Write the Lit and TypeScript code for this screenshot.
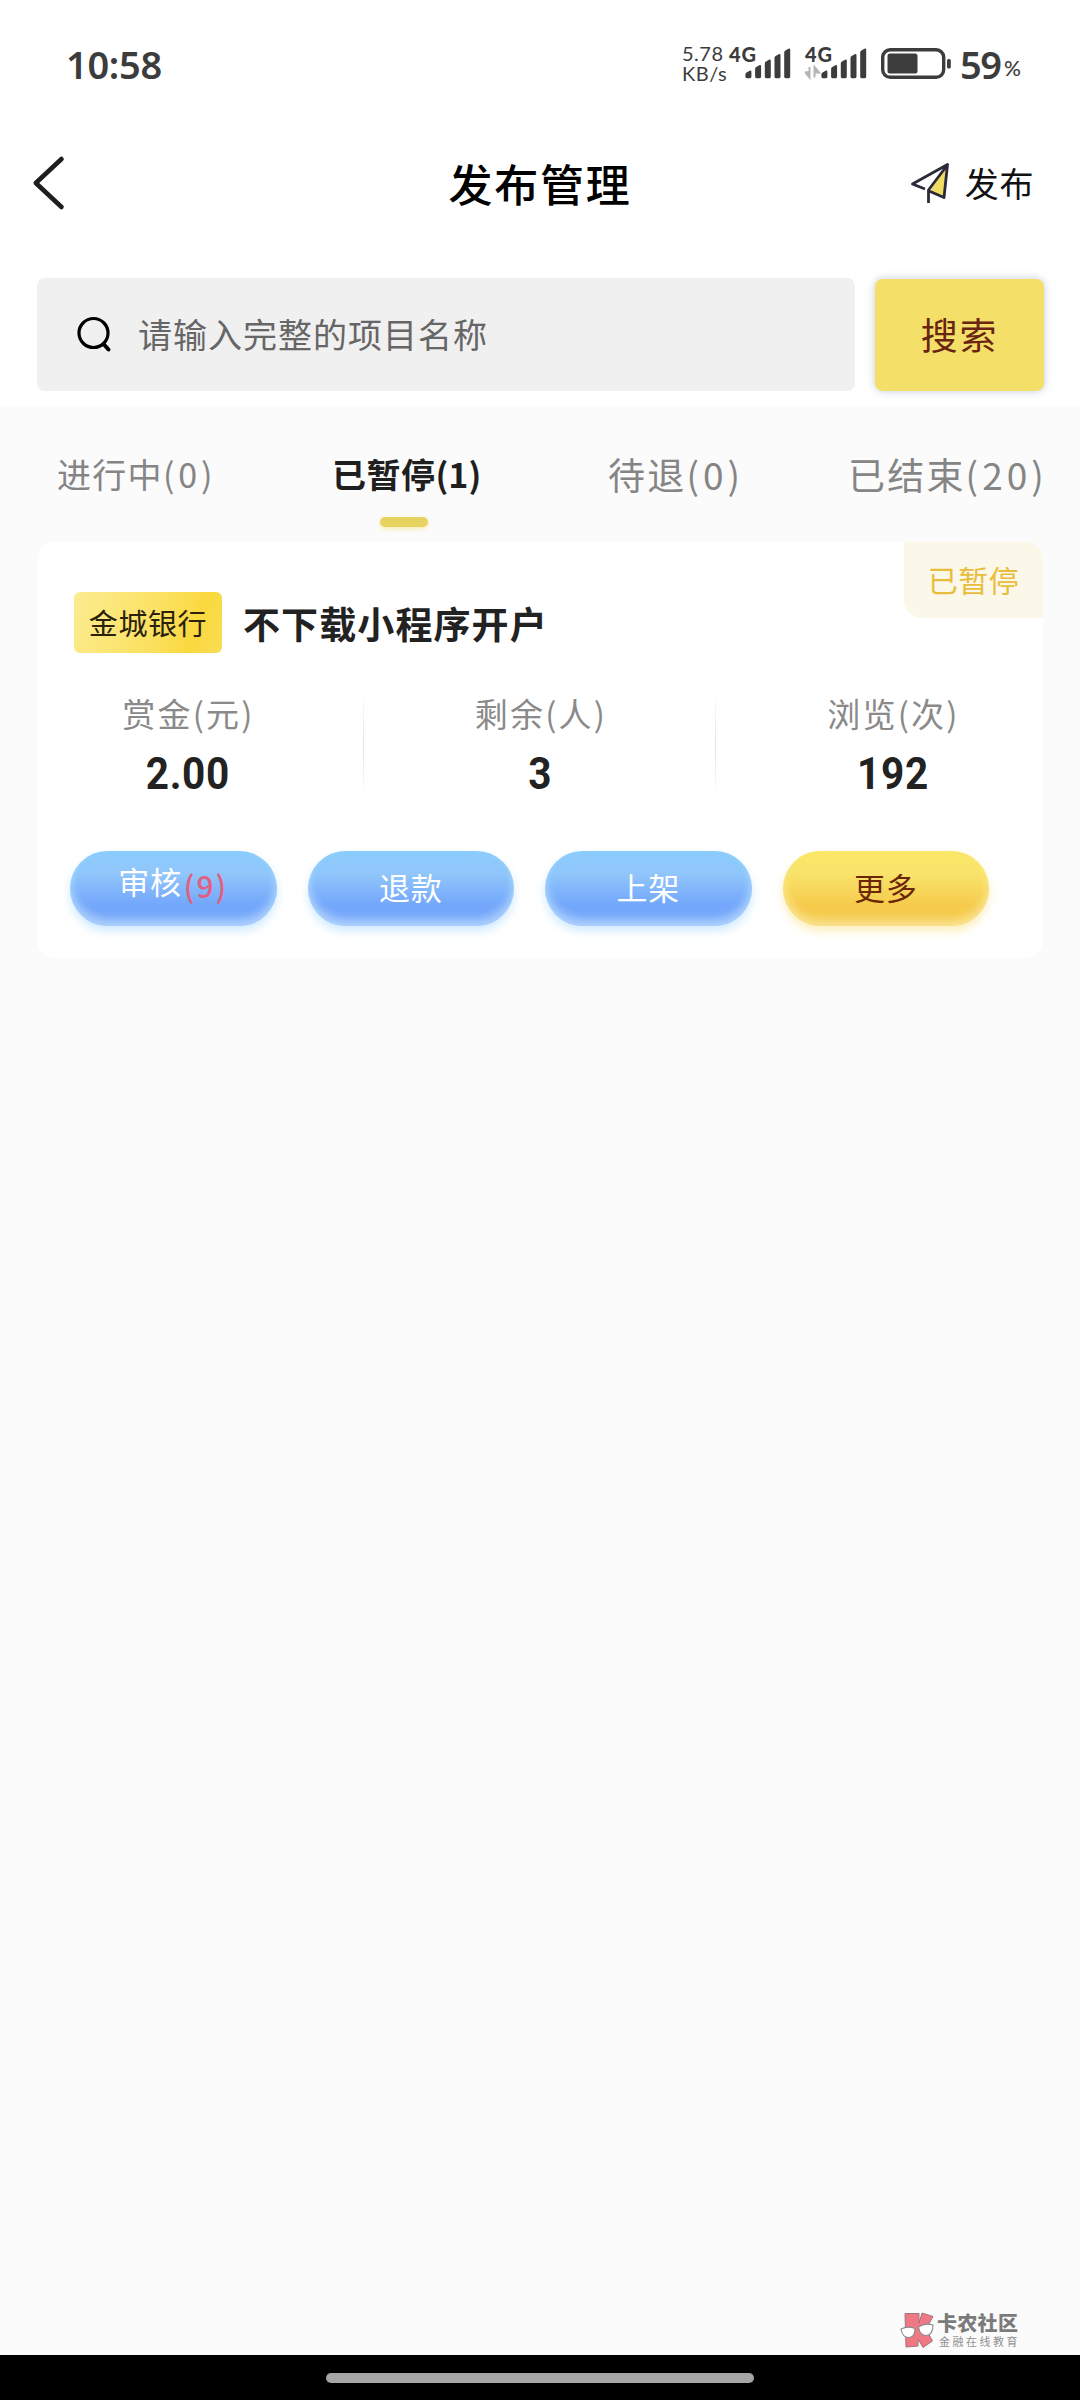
import { LitElement, html, css, svg } from "lit";
import { customElement, property } from "lit/decorators.js";

const cjk = css`"Noto Sans CJK SC", "Noto Sans", sans-serif`;

@customElement("signal-bars")
class SignalBars extends LitElement {
  @property({ type: Boolean }) data = false;

  static styles = css`
    :host { display: block; }
    .wrap { display: block; position: relative; width: 62px; height: 34px; }
    .gen { position: absolute; left: 0; top: -1px; font: 900 20px/18px Lato, sans-serif; letter-spacing: 0.8px; color: #3c3c3c; }
    svg { display: block; }
  `;

  render() {
    const tops = [24.5, 19, 13.5, 8, 2.5];
    return html`<div class="wrap">
      <span class="gen">4G</span>
      <svg width="62" height="34" viewBox="0 0 62 34">
        ${tops.map((t, i) => {
          const x = 16.4 + i * 9.7;
          return svg`<path d="M${x} ${t + 4}q0-1.4 1.2-2l3-1.8q1.8-.8 1.8 1V30.8q0 1.400-1.400 1.400h-3.200q-1.400 0-1.400-1.400z" fill="#3c3c3c"/>`;
        })}
        ${this.data
          ? svg`<path d="M4.500 21v10.500L0 26.200h4.500M9.500 31.500V21L14 26.400H9.500" fill="#b5b5b5" stroke="#b5b5b5" stroke-width="2"/>`
          : null}
      </svg>
    </div>`;
  }
}

@customElement("action-pill")
class ActionPill extends LitElement {
  @property() label = "";
  @property() count = "";
  @property({ type: Boolean, reflect: true }) gold = false;

  static styles = css`
    :host {
      display: flex; align-items: center; justify-content: center; box-sizing: border-box;
      width: 206.5px; height: 75px; padding-bottom: 3px; border-radius: 38px;
      font: 400 31px/40px ${cjk}; letter-spacing: 0.7px; color: #fff;
      background: linear-gradient(180deg, #8dcdfd 0%, #91c6fb 30%, #74a8fb 70%, #6fa3fb 100%);
      box-shadow: 0 5px 10px rgba(140, 205, 255, 0.42), inset 0 -7px 10px rgba(255, 255, 255, 0.42), inset 0 0 12px rgba(130, 205, 252, 0.6);
    }
    :host([gold]) {
      color: #6b2708;
      background: linear-gradient(180deg, #fbe868 0%, #f9e36c 30%, #f6cb4b 72%, #f6c846 100%);
      box-shadow: 0 5px 10px rgba(250, 215, 90, 0.42), inset 0 -7px 10px rgba(255, 255, 255, 0.36), inset 0 0 12px rgba(250, 228, 100, 0.7);
    }
    .raised { padding-bottom: 12px; }
    .count { color: #e0607f; font-size: 30px; font-weight: 500; letter-spacing: 2px; padding: 0 0 4px 2px; }
  `;

  render() {
    return this.count
      ? html`<span class="raised">${this.label}</span><span class="count">(${this.count})</span>`
      : html`<span>${this.label}</span>`;
  }
}

@customElement("app-root")
class AppRoot extends LitElement {
  static styles = css`
    :host { display: block; }
    * { box-sizing: border-box; }
    .page { display: flex; flex-direction: column; width: 1080px; height: 2400px; background: #fbfbfb; font-family: ${cjk}; overflow: hidden; }
    .top { background: #fff; height: 407px; display: flex; flex-direction: column; }
    .status { display: flex; height: 120px; padding: 45px 58px 0 66px; color: #3c3c3c; align-items: flex-start; font-family: Lato, sans-serif; }
    .clock { font: 600 38px/38px "Noto Sans", sans-serif; flex: 1; letter-spacing: -0.3px; }
    .speed { width: 47px; font-size: 20px; line-height: 20.5px; white-space: nowrap; letter-spacing: 0.500px; margin-top: -2.500px; }
    .sig { width: 76px; padding-top: 1px; }
    .battery { display: block; margin: 2px 8px 0 -1px; }
    .pct { font: 600 38px/38px "Noto Sans", sans-serif; letter-spacing: -1.500px; width: 44px; }
    .sign { font-size: 21px; line-height: 46px; width: 18px; font-weight: 500; }

    .nav { display: grid; grid-template-columns: 1fr auto 1fr; align-items: center; height: 126px; padding: 0 46px 0 32px; }
    .back { display: block; }
    .title { font-size: 44px; line-height: 60px; font-weight: 500; letter-spacing: 1.800px; color: #000; margin: 0 -7px 0 7px; }
    .publish { display: flex; justify-content: flex-end; align-items: center; gap: 13px; font-size: 34px; line-height: 48px; letter-spacing: 0.600px; color: #111; }
    .publish span { padding-bottom: 1px; }

    .search { display: flex; gap: 20px; padding: 32px 36px 0 37px; }
    .field { display: flex; align-items: center; width: 818px; height: 113px; padding-left: 39px; gap: 26px; border-radius: 8px; background: #f0f0f0; color: #666; font-size: 34px; line-height: 48px; letter-spacing: 1px; }
    .field span { padding-bottom: 2px; }
    .go { display: flex; align-items: center; justify-content: center; width: 169px; height: 112px; margin-top: 1px; padding-bottom: 2px; border-radius: 8px; background: #f4df68; color: #6a2412; font-size: 37px; line-height: 50px; letter-spacing: 1.700px; box-shadow: 0 0 9px rgba(90, 120, 150, 0.38); }

    .tabs { display: grid; grid-template-columns: 275px 276px 240px auto; height: 135px; padding: 37px 0 0 57px; color: #858585; white-space: nowrap; }
    .tab { display: flex; flex-direction: column; align-items: flex-start; font-size: 34px; line-height: 60px; letter-spacing: 1.300px; }
    .num { letter-spacing: 3.800px; }
    .wide { font-size: 37px; letter-spacing: 2.200px; }
    .wide .num { letter-spacing: 4px; }
    .on { color: #1f1f1f; font-weight: 700; letter-spacing: 0.500px; }
    .on .num { letter-spacing: 0; }
    .mark { width: 48px; height: 10px; margin: 13px 0 0 48px; border-radius: 5px; background: #e6d360; box-shadow: 0 2px 4px rgba(244, 223, 104, 0.5); }

    .card { display: flex; flex-direction: column; width: 1006px; height: 416px; margin-left: 37px; border-radius: 18px; background: #fff; overflow: hidden; }
    .head { display: flex; height: 141px; padding-left: 37px; }
    .bank { display: flex; align-items: center; justify-content: center; width: 148px; height: 61px; margin-top: 50px; padding-bottom: 2px; border-radius: 6px; background: linear-gradient(110deg, #fcec92 0%, #fbe161 55%, #fad83e 80%, #f8dc55 100%); color: #2a220c; font-size: 29px; line-height: 40px; letter-spacing: 0.600px; }
    .name { flex: 1; margin: 51px 0 0 21px; font-size: 37px; line-height: 60px; font-weight: 700; letter-spacing: 1.100px; color: #222; }
    .state { display: flex; align-items: center; justify-content: center; width: 139px; height: 76px; padding-bottom: 2px; border-radius: 0 0 0 18px; background: #fcf8e9; color: #e9bd3c; font-size: 30px; line-height: 40px; letter-spacing: 0.500px; }

    .stats { display: grid; grid-template-columns: 353px 352px 353px; margin: 0 -26px; height: 168px; }
    .stat { display: flex; flex-direction: column; align-items: center; padding-top: 5px; }
    .label { font-size: 33px; line-height: 50px; letter-spacing: 2.200px; color: #8a8a8a; padding-left: 2px; }
    .value { font: 700 45px/50px Roboto, sans-serif; letter-spacing: 0.800px; color: #222; padding-top: 11px; transform: scaleX(0.9); }
    .stat:not(:last-child) { background: linear-gradient(180deg, #fff 0%, #e4e4e4 50%, #fff 100%) right 6px / 1.500px 112px no-repeat; }
    .actions { display: flex; gap: 31px; padding-left: 33px; }

    .space { flex: 1; }
    .brand { display: flex; height: 45px; padding-left: 900px; gap: 3px; }
    .logo { display: block; }
    .words { display: flex; flex-direction: column; padding-top: 2px; }
    .big { font-size: 20px; line-height: 22px; font-weight: 900; color: #7b7b7b; letter-spacing: 0.300px; white-space: nowrap; }
    .small { font-size: 11px; line-height: 14px; color: #909090; letter-spacing: 2.500px; padding: 0 0 0 2px; white-space: nowrap; }
    .home { display: flex; justify-content: center; height: 45px; padding-top: 17.500px; background: #000; }
    .pill { width: 428px; height: 10.500px; border-radius: 6px; background: #a6a6a6; }
  `;

  private tabs = [
    { label: "进行中", count: 0, cls: "tab" },
    { label: "已暂停", count: 1, cls: "tab on" },
    { label: "待退", count: 0, cls: "tab wide" },
    { label: "已结束", count: 20, cls: "tab wide" },
  ];

  private stats = [
    ["赏金(元)", "2.00"],
    ["剩余(人)", "3"],
    ["浏览(次)", "192"],
  ];

  render() {
    return html`<div class="page">
      <div class="top">
        <div class="status">
          <div class="clock">10:58</div>
          <div class="speed">5.78<br />KB/s</div>
          <div class="sig"><signal-bars></signal-bars></div>
          <div class="sig"><signal-bars data></signal-bars></div>
          <svg class="battery" width="72" height="34" viewBox="0 0 72 34">
            <rect x="2.700" y="2.800" width="61" height="27.500" rx="7.500" fill="none" stroke="#3c3c3c" stroke-width="3.400" />
            <rect x="7.500" y="6.500" width="30" height="20" rx="2.500" fill="#3c3c3c" />
            <rect x="67" y="12" width="3.800" height="9.500" rx="1.500" fill="#3c3c3c" />
          </svg>
          <div class="pct">59</div>
          <div class="sign">%</div>
        </div>
        <div class="nav">
          <svg class="back" width="34" height="56" viewBox="0 0 34 56">
            <path d="M29.500 4L3.800 28L29.500 52" fill="none" stroke="#1e1e1e" stroke-width="4.600" stroke-linecap="round" stroke-linejoin="round" />
          </svg>
          <div class="title">发布管理</div>
          <div class="publish">
            <svg width="42" height="42" viewBox="0 0 42 42">
              <path d="M37 4L20 29L34 35z" fill="#f2dc62" />
              <path d="M15 27L2.500 22L37.500 2.500L34 35.500L19 29M37 3.500L18.500 28V41" fill="none" stroke="#2a2a3a" stroke-width="2.800" stroke-linejoin="round" />
            </svg>
            <span>发布</span>
          </div>
        </div>
        <div class="search">
          <div class="field">
            <svg width="36" height="38" viewBox="0 0 36 38">
              <circle cx="17.500" cy="17" r="14.500" fill="none" stroke="#000" stroke-width="3.200" />
              <path d="M27.500 28L32.500 33.500" stroke="#000" stroke-width="4" stroke-linecap="round" />
            </svg>
            <span>请输入完整的项目名称</span>
          </div>
          <div class="go">搜索</div>
        </div>
      </div>

      <div class="tabs">
        ${this.tabs.map(
          (t) => html`<div class=${t.cls}>
            <div>${t.label}<span class="num">(${t.count})</span></div>
            ${t.cls.includes("on") ? html`<div class="mark"></div>` : null}
          </div>`
        )}
      </div>

      <div class="card">
        <div class="head">
          <div class="bank">金城银行</div>
          <div class="name">不下载小程序开户</div>
          <div class="state">已暂停</div>
        </div>
        <div class="stats">
          ${this.stats.map(
            ([label, value]) => html`<div class="stat"><div class="label">${label}</div><div class="value">${value}</div></div>`
          )}
        </div>
        <div class="actions">
          <action-pill label="审核" count="9"></action-pill>
          <action-pill label="退款"></action-pill>
          <action-pill label="上架"></action-pill>
          <action-pill label="更多" gold></action-pill>
        </div>
      </div>

      <div class="space"></div>
      <div class="brand">
        <svg class="logo" width="34" height="40" viewBox="0 0 34 40">
          <path d="M5 3.500H19V13L22 3L33 6.500L26 19L32.500 31L23 37.500L18 29V36L6 37z" fill="#f07884" stroke="#a0747a" stroke-width="1" />
          <path d="M1 19Q8 15.500 15 18.500Q15 27.500 8.500 27.500Q2.500 27.500 1 19zM18.500 17Q25 12.500 33 15Q33 25 26 25.500Q20 25.500 18.500 17z" fill="#fff" stroke="#8a8a8a" stroke-width="1.100" />
        </svg>
        <div class="words">
          <div class="big">卡农社区</div>
          <div class="small">金融在线教育</div>
        </div>
      </div>
      <div class="home"><div class="pill"></div></div>
    </div>`;
  }
}
